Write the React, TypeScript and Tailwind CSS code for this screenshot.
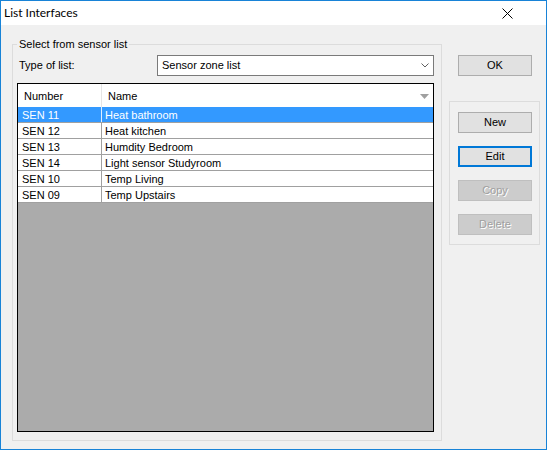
import React from 'react';

const rows = [
  { num: 'SEN 11', name: 'Heat bathroom' },
  { num: 'SEN 12', name: 'Heat kitchen' },
  { num: 'SEN 13', name: 'Humdity Bedroom' },
  { num: 'SEN 14', name: 'Light sensor Studyroom' },
  { num: 'SEN 10', name: 'Temp Living' },
  { num: 'SEN 09', name: 'Temp Upstairs' },
];

function Button({ label, focused, disabled }: { label: string; focused?: boolean; disabled?: boolean }) {
  let cls = 'bg-[#e1e1e1] border border-[#adadad] text-black';
  if (focused) cls = 'bg-[#e1e1e1] border-2 border-[#0078d7] text-black';
  if (disabled) cls = 'bg-[#cccccc] border border-[#bfbfbf] text-[#a0a0a0] [text-shadow:1px_1px_0_#ffffff]';
  return (
    <div className={`w-[74px] h-[21px] flex items-center justify-center text-[11px] leading-none ${cls}`}>
      {label}
    </div>
  );
}

export default function App() {
  return (
    <div className="w-[547px] h-[450px] border border-[#1883d7] bg-[#f0f0f0] flex flex-col font-['Liberation_Sans',Arial,sans-serif] text-[11px] text-black">
      {/* title bar */}
      <div className="h-[24px] bg-white flex items-center justify-between pl-[3px] pr-[33px]">
        <span className="text-[12px] font-['Lato',sans-serif]">List Interfaces</span>
        <svg width="11" height="11" viewBox="0 0 11 11">
          <path d="M0.5 0.5 L10.5 10.5 M10.5 0.5 L0.5 10.5" stroke="#000" strokeWidth="1" />
        </svg>
      </div>

      <div className="flex-1 flex pl-[11px] pt-[13px] pb-[8px]">
        <fieldset className="w-[430px] border border-[#dcdcdc] pl-[4px] pr-[7px] pb-[8px] flex flex-col">
          <legend className="px-[2px] leading-[13px]">Select from sensor list</legend>
          <div className="flex items-center justify-between mt-[4px]">
            <span className="pl-[2px]">Type of list:</span>
            <div className="w-[277px] h-[21px] bg-white border border-[#7a7a7a] flex items-center justify-between pl-[4px] pr-[4px]">
              <span>Sensor zone list</span>
              <svg width="8" height="5" viewBox="0 0 8 5">
                <path d="M0.5 0.5 L4 4 L7.5 0.5" stroke="#606060" strokeWidth="1" fill="none" />
              </svg>
            </div>
          </div>

          <div className="mt-[7px] flex-1 border border-black flex flex-col">
            <div className="h-[23px] bg-white flex shrink-0">
              <div className="w-[84px] border-r border-[#e5e5e5] pl-[6px] pt-[1px] flex items-center">Number</div>
              <div className="flex-1 pl-[6px] pr-[4px] pt-[1px] flex items-center justify-between">
                <span>Name</span>
                <svg width="9" height="5" viewBox="0 0 9 5">
                  <path d="M0 0 L9 0 L4.5 5 Z" fill="#a0a0a0" />
                </svg>
              </div>
            </div>
            {rows.map((r, i) => {
              const sel = i === 0;
              return (
                <div
                  key={r.num}
                  className={`h-[16px] flex border-b border-[#a0a0a0] ${sel ? 'bg-[#3399ff] text-white' : 'bg-white'}`}
                >
                  <div className={`w-[84px] border-r pl-[4px] pt-[2px] flex items-center ${sel ? 'border-[#dfeeff]' : 'border-[#a0a0a0]'}`}>
                    {r.num}
                  </div>
                  <div className="flex-1 pl-[3px] pt-[2px] flex items-center">{r.name}</div>
                </div>
              );
            })}
            <div className="flex-1 bg-[#ababab]" />
          </div>
        </fieldset>

        <div className="ml-[7px] w-[91px] pt-[17px] flex flex-col">
          <div className="ml-[9px]">
            <Button label="OK" />
          </div>
          <div className="mt-[25px] border border-[#dcdcdc] pl-[8px] pt-[10px] pb-[9px] flex flex-col gap-[13px]">
            <Button label="New" />
            <Button label="Edit" focused />
            <Button label="Copy" disabled />
            <Button label="Delete" disabled />
          </div>
        </div>
      </div>
    </div>
  );
}
